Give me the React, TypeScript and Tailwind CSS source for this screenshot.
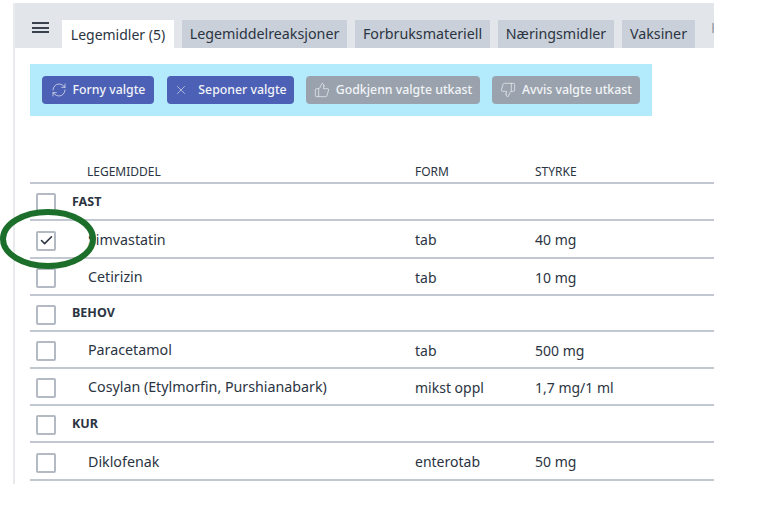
import { RefreshCw, X, ThumbsUp, ThumbsDown, Check } from "lucide-react";

const tabs = [
  { label: "Legemiddelreaksjoner", w: "w-[165px]" },
  { label: "Forbruksmateriell", w: "w-[135px]" },
  { label: "Næringsmidler", w: "w-[116px]" },
  { label: "Vaksiner", w: "w-[73px]" },
];

type Row = { name: string; form?: string; dose?: string; group?: boolean; checked?: boolean; h: string };

const rows: Row[] = [
  { name: "FAST", group: true, h: "h-[37px]" },
  { name: "Simvastatin", form: "tab", dose: "40 mg", checked: true, h: "h-[38px]" },
  { name: "Cetirizin", form: "tab", dose: "10 mg", h: "h-[37px]" },
  { name: "BEHOV", group: true, h: "h-[36px]" },
  { name: "Paracetamol", form: "tab", dose: "500 mg", h: "h-[37px]" },
  { name: "Cosylan (Etylmorfin, Purshianabark)", form: "mikst oppl", dose: "1,7 mg/1 ml", h: "h-[37px]" },
  { name: "KUR", group: true, h: "h-[37px]" },
  { name: "Diklofenak", form: "enterotab", dose: "50 mg", h: "h-[38px]" },
];

export default function App() {
  return (
    <div className="relative h-[524px] w-[768px] overflow-hidden bg-white pt-[3px] font-['Noto_Sans',sans-serif] text-[14px] text-[#2b3442]">
      <div className="ml-[13px] h-[481px] w-[701px] border-l-2 border-[#e8eaee]">
        {/* tabs */}
        <div className="flex h-[45px] items-end overflow-hidden bg-[#e2e5ea] pl-[47px]">
          <div className="flex h-7 w-[112px] shrink-0 items-center justify-center bg-white">Legemidler (5)</div>
          {tabs.map((tab) => (
            <div key={tab.label} className={`ml-2 flex h-7 shrink-0 items-center justify-center bg-[#c9d0d9] text-[14.25px] ${tab.w}`}>
              {tab.label}
            </div>
          ))}
          <div className="mb-[7px] ml-4 flex h-7 shrink-0 items-center text-[#8f97a3]">Historikk</div>
        </div>

        <div className="pl-[15px] pt-4">
          {/* toolbar */}
          <div className="flex h-[52px] w-[622px] items-center gap-3 bg-[#b3ebfd] px-3 text-[12.3px] font-medium text-[#f2f4f8]">
            <button className="flex h-[28px] w-[112px] items-center justify-center gap-1.5 rounded-sm bg-[#4c60b5]">
              <RefreshCw size={16} strokeWidth={1} />
              Forny valgte
            </button>
            <button className="ml-px flex h-[28px] w-[127px] items-center justify-center gap-2.5 rounded-sm bg-[#4c60b5]">
              <X size={14} strokeWidth={1} />
              Seponer valgte
            </button>
            <button className="flex h-[28px] w-[174px] items-center justify-center gap-1.5 rounded-sm bg-[#9aa3ad]">
              <ThumbsUp size={16} strokeWidth={1} />
              Godkjenn valgte utkast
            </button>
            <button className="flex h-[28px] w-[148px] items-center justify-center gap-1.5 rounded-sm bg-[#9aa3ad]">
              <ThumbsDown size={16} strokeWidth={1} />
              Avvis valgte utkast
            </button>
          </div>

          {/* table */}
          <div className="mt-[45px] flex h-[23px] items-center border-b-2 border-[#c2c8d1] text-[12px]">
            <div className="w-[385px] pl-[57px]">LEGEMIDDEL</div>
            <div className="w-[120px]">FORM</div>
            <div>STYRKE</div>
          </div>
          {rows.map((row) => (
            <div key={row.name} className={`flex items-center border-b-2 border-[#c2c8d1] ${row.h}`}>
              <div className="ml-[6px] mt-[3px] flex h-5 w-5 shrink-0 items-center justify-center rounded-[2px] border-2 border-[#b4bac3] bg-white">
                {row.checked && <Check size={15} strokeWidth={2.5} className="text-[#2b3442]" />}
              </div>
              {row.group ? (
                <div className="ml-4 mt-px text-[12.5px] font-bold">{row.name}</div>
              ) : (
                <>
                  <div className="ml-8 mt-px w-[327px] text-[14.25px]">{row.name}</div>
                  <div className="mt-px w-[120px]">{row.form}</div>
                  <div className="mt-px">{row.dose}</div>
                </>
              )}
            </div>
          ))}
        </div>
      </div>

      {/* hamburger */}
      <div className="absolute left-8 top-[22px] flex flex-col gap-[2.5px]">
        <div className="h-0.5 w-[17px] bg-[#3a4250]" />
        <div className="h-0.5 w-[17px] bg-[#3a4250]" />
        <div className="h-0.5 w-[17px] bg-[#3a4250]" />
      </div>

      {/* annotation circle */}
      <svg className="absolute left-0 top-[206px]" width="100" height="66" viewBox="0 0 100 66" fill="none">
        <ellipse cx="48" cy="33" rx="45" ry="27" stroke="#1c6e2b" strokeWidth="6" />
      </svg>
    </div>
  );
}
